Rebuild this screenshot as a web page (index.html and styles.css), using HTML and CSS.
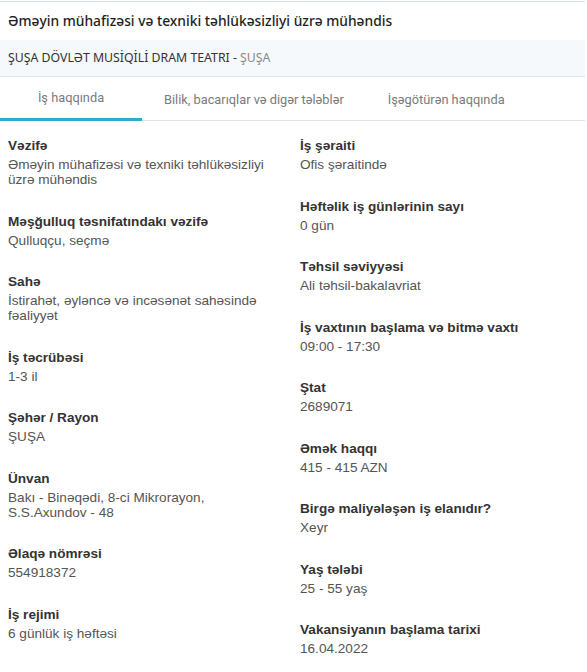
FILE: index.html
```html
<!DOCTYPE html>
<html lang="az">
<head>
    <meta charset="UTF-8">
    <meta name="viewport" content="width=device-width, initial-scale=1.0">
    <title>Vakansiya</title>
    <link rel="stylesheet" href="styles.css">
</head>
<body>
    <div class="vacancy">
        <h1 class="vacancy-title">Əməyin mühafizəsi və texniki təhlükəsizliyi üzrə mühəndis</h1>
        <div class="company">ŞUŞA DÖVLƏT MUSİQİLİ DRAM TEATRI - <span class="company-city">ŞUŞA</span></div>

        <nav class="tabs">
            <a class="tab active">İş haqqında</a>
            <a class="tab">Bilik, bacarıqlar və digər tələblər</a>
            <a class="tab">İşəgötürən haqqında</a>
        </nav>

        <div class="details">
            <div class="col">
                <div class="item">
                    <div class="label">Vəzifə</div>
                    <div class="value">Əməyin mühafizəsi və texniki təhlükəsizliyi üzrə mühəndis</div>
                </div>
                <div class="item">
                    <div class="label">Məşğulluq təsnifatındakı vəzifə</div>
                    <div class="value">Qulluqçu, seçmə</div>
                </div>
                <div class="item">
                    <div class="label">Sahə</div>
                    <div class="value">İstirahət, əyləncə və incəsənət sahəsində fəaliyyət</div>
                </div>
                <div class="item">
                    <div class="label">İş təcrübəsi</div>
                    <div class="value">1-3 il</div>
                </div>
                <div class="item">
                    <div class="label">Şəhər / Rayon</div>
                    <div class="value">ŞUŞA</div>
                </div>
                <div class="item">
                    <div class="label">Ünvan</div>
                    <div class="value">Bakı - Binəqədi, 8-ci Mikrorayon, S.S.Axundov - 48</div>
                </div>
                <div class="item">
                    <div class="label">Əlaqə nömrəsi</div>
                    <div class="value">554918372</div>
                </div>
                <div class="item">
                    <div class="label">İş rejimi</div>
                    <div class="value">6 günlük iş həftəsi</div>
                </div>
            </div>

            <div class="col">
                <div class="item">
                    <div class="label">İş şəraiti</div>
                    <div class="value">Ofis şəraitində</div>
                </div>
                <div class="item">
                    <div class="label">Həftəlik iş günlərinin sayı</div>
                    <div class="value">0 gün</div>
                </div>
                <div class="item">
                    <div class="label">Təhsil səviyyəsi</div>
                    <div class="value">Ali təhsil-bakalavriat</div>
                </div>
                <div class="item">
                    <div class="label">İş vaxtının başlama və bitmə vaxtı</div>
                    <div class="value">09:00 - 17:30</div>
                </div>
                <div class="item">
                    <div class="label">Ştat</div>
                    <div class="value">2689071</div>
                </div>
                <div class="item">
                    <div class="label">Əmək haqqı</div>
                    <div class="value">415 - 415 AZN</div>
                </div>
                <div class="item">
                    <div class="label">Birgə maliyələşən iş elanıdır?</div>
                    <div class="value">Xeyr</div>
                </div>
                <div class="item">
                    <div class="label">Yaş tələbi</div>
                    <div class="value">25 - 55 yaş</div>
                </div>
                <div class="item">
                    <div class="label">Vakansiyanın başlama tarixi</div>
                    <div class="value">16.04.2022</div>
                </div>
            </div>
        </div>
    </div>
</body>
</html>
```

FILE: styles.css
```css
/* Основа */
body {
    margin: 0;
    padding: 0;
    background: #fff;
    font-family: "Liberation Sans", Arial, sans-serif;
    overflow: hidden;
}

.vacancy {
    width: 585px;
    border-top: 1px solid #d3e2ec;
    margin-top: 1px;
}

/* Заголовок */
.vacancy-title {
    margin: 0;
    padding: 0 8px;
    height: 38px;
    line-height: 38px;
    font-family: "Noto Sans", sans-serif;
    font-size: 13.8px;
    font-weight: 500;
    color: #1e1e1e;
}

.company {
    background: #f5f9fc;
    border-bottom: 1px solid #dfe4e8;
    padding: 0 8px;
    height: 36px;
    line-height: 36px;
    font-family: "Noto Sans", sans-serif;
    font-size: 12.3px;
    color: #333;
}

.company-city {
    color: #8a8a8a;
}

/* Вкладки */
.tabs {
    display: flex;
    border-bottom: 1px solid #e2e2e2;
    height: 43px;
}

.tab {
    display: block;
    padding: 0 22px;
    line-height: 45px;
    font-family: Roboto, sans-serif;
    font-size: 12.8px;
    color: #7a7a7a;
    box-sizing: border-box;
}

.tab.active {
    width: 142px;
    text-align: center;
    padding: 0;
    border-bottom: 3px solid #2eadcf;
    line-height: 42px;
    height: 44px;
}

/* Детали */
.details {
    display: grid;
    grid-template-columns: 292px 1fr;
    padding-top: 16px;
}

.col {
    padding-left: 8px;
}

.item {
    margin-bottom: 25.5px;
}

.label {
    font-size: 13.6px;
    font-weight: bold;
    line-height: 18px;
    margin-bottom: 2px;
    color: #333;
}

.value {
    font-size: 13.6px;
    line-height: 15px;
    color: #555;
    padding-right: 20px;
}
```
